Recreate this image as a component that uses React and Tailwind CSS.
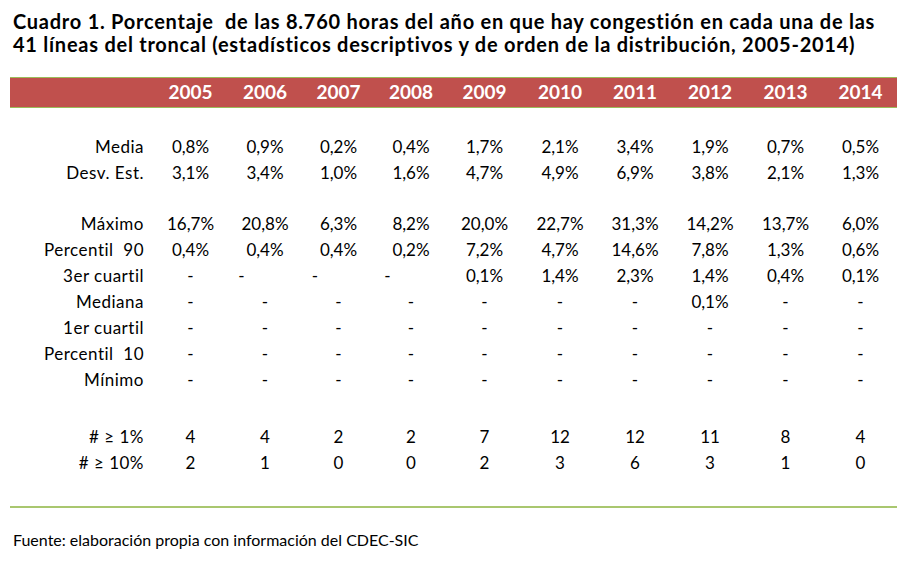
import React from 'react';

const years = ['2005', '2006', '2007', '2008', '2009', '2010', '2011', '2012', '2013', '2014'];

const groups = [
  {
    mt: 'mt-[26px]',
    rows: [
      ['Media', ['0,8%', '0,9%', '0,2%', '0,4%', '1,7%', '2,1%', '3,4%', '1,9%', '0,7%', '0,5%']],
      ['Desv. Est.', ['3,1%', '3,4%', '1,0%', '1,6%', '4,7%', '4,9%', '6,9%', '3,8%', '2,1%', '1,3%']],
    ],
  },
  {
    mt: 'mt-[25px]',
    rows: [
      ['Máximo', ['16,7%', '20,8%', '6,3%', '8,2%', '20,0%', '22,7%', '31,3%', '14,2%', '13,7%', '6,0%']],
      ['Percentil  90', ['0,4%', '0,4%', '0,4%', '0,2%', '7,2%', '4,7%', '14,6%', '7,8%', '1,3%', '0,6%']],
      ['3er cuartil', ['-', '-', '-', '-', '0,1%', '1,4%', '2,3%', '1,4%', '0,4%', '0,1%'], true],
      ['Mediana', ['-', '-', '-', '-', '-', '-', '-', '0,1%', '-', '-']],
      ['1er cuartil', ['-', '-', '-', '-', '-', '-', '-', '-', '-', '-']],
      ['Percentil  10', ['-', '-', '-', '-', '-', '-', '-', '-', '-', '-']],
      ['Mínimo', ['-', '-', '-', '-', '-', '-', '-', '-', '-', '-']],
    ],
  },
  {
    mt: 'mt-[31px]',
    rows: [
      ['# ≥ 1%', ['4', '4', '2', '2', '7', '12', '12', '11', '8', '4']],
      ['# ≥ 10%', ['2', '1', '0', '0', '2', '3', '6', '3', '1', '0']],
    ],
  },
];

const cols = 'grid grid-cols-[143px_75px_74px_73px_72px_75px_76px_74px_76px_75px_75px]';

export default function App() {
  return (
    <div
      className="w-[900px] h-[562px] bg-white text-black overflow-hidden [font-variant-ligatures:none]"
      style={{ fontFamily: 'Lato, "Open Sans", sans-serif' }}
    >
      {/* Title */}
      <div className="pl-[13px] pt-[10px] text-[20px] font-bold leading-[23px] tracking-[0.75px] whitespace-pre">
        <div>Cuadro 1. Porcentaje  de las 8.760 horas del año en que hay congestión en cada una de las</div>
        <div>41 líneas del troncal (estadísticos descriptivos y de orden de la distribución, 2005-2014)</div>
      </div>

      {/* Header bar */}
      <div className="ml-[10px] mt-[21px] w-[887px] h-[31px] bg-[#c0504d] border-y border-[#9bbb59]">
        <div className={cols + ' h-full items-center'}>
          <div />
          {years.map((y) => (
            <div key={y} className="text-center text-white font-bold text-[19px]">{y}</div>
          ))}
        </div>
      </div>

      {/* Data */}
      <div className="ml-[10px] w-[887px] text-[17px]">
        {groups.map((g, gi) => (
          <div key={gi} className={g.mt}>
            {g.rows.map(([label, vals, shift]) => (
              <div key={label} className={cols + ' h-[26px] items-center'}>
                <div className="text-right pr-[9px] tracking-[0.5px] whitespace-pre">{label}</div>
                {vals.map((v, i) => (
                  <div
                    key={i}
                    className={'text-center ' + (shift && i > 0 && i < 4 ? 'pr-[47px]' : '')}
                  >
                    {v}
                  </div>
                ))}
              </div>
            ))}
          </div>
        ))}
      </div>

      {/* Bottom rule */}
      <div className="ml-[10px] mt-[30px] w-[887px] h-[2px] bg-[#a9c76f]" />

      {/* Source */}
      <div className="pl-[13px] mt-[20px] text-[16px]">
        Fuente: elaboración propia con información del CDEC-SIC
      </div>
    </div>
  );
}
